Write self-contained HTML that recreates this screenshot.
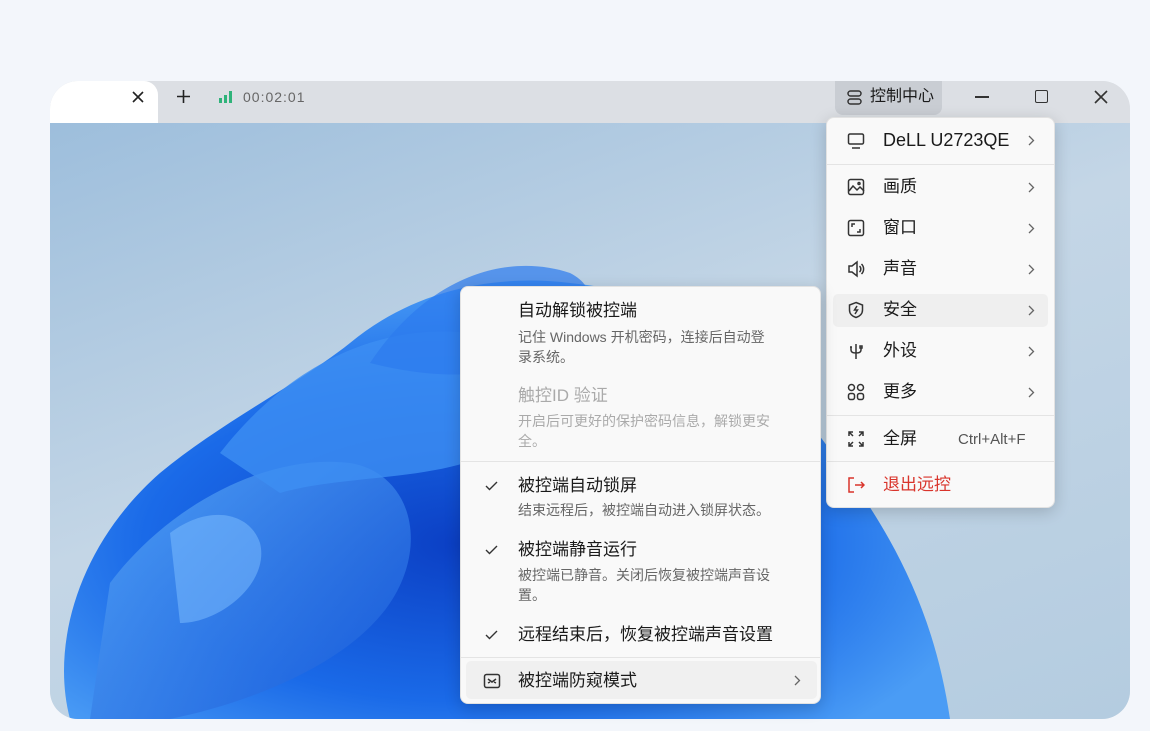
<!DOCTYPE html>
<html><head><meta charset="utf-8"><style>
*{margin:0;padding:0;box-sizing:border-box}
body{width:1150px;height:731px;background:#f3f6fb;position:relative;overflow:hidden;font-family:"Liberation Sans","Noto Sans CJK SC",sans-serif;color:#1a1a1a}
.win{position:absolute;left:50px;top:81px;width:1080px;height:638px;border-radius:28px;overflow:hidden;background:#dde1e6}
.tb{position:absolute;left:0;top:0;width:1080px;height:42px;background:#dcdfe4}
.tab{position:absolute;left:0;top:0;width:108px;height:42px;background:#fff;border-radius:0 14px 0 0}
.desk{position:absolute;left:0;top:42px;width:1080px;height:596px;background:linear-gradient(160deg,#9dbedc 0%,#c4d6e6 45%,#b4cce0 100%)}
.t{position:absolute;white-space:nowrap;line-height:1.15}
.menu{position:absolute;background:#f9f9f9;border-radius:8px;box-shadow:0 4px 16px rgba(0,0,0,.18);border:1px solid #e2e2e2}
.sep{position:absolute;left:0;right:0;height:1px;background:#e4e4e4}
svg.i{position:absolute}
</style></head><body>
<div class="win">
 <div class="tb"></div>
 <div class="tab"></div>
 <svg class="i" style="left:82px;top:10px" width="12" height="12" stroke="#222" stroke-width="1.6"><path d="M1 1l10 10M11 1L1 11"/></svg>
 <svg class="i" style="left:127px;top:9px" width="13" height="13" stroke="#222" stroke-width="1.6"><path d="M6.5 0v13M0 6.5h13"/></svg>
 <svg class="i" style="left:168px;top:8px" width="16" height="16"><rect x="1" y="9" width="3" height="5" fill="#2fb37a"/><rect x="6" y="6" width="3" height="8" fill="#2fb37a"/><rect x="11" y="2" width="3" height="12" fill="#2fb37a"/></svg>
 <div class="t" style="left:193px;top:8px;font-size:14px;color:#666;letter-spacing:1px">00:02:01</div>
 <div style="position:absolute;left:785px;top:0;width:107px;height:34px;background:#c9cdd3;border-radius:0 0 8px 8px"></div>
 <svg class="i" style="left:796px;top:8px" width="17" height="17" fill="none" stroke="#333" stroke-width="1.5"><rect x="2" y="2" width="13" height="5" rx="2.5"/><rect x="2" y="10" width="13" height="5" rx="2.5"/></svg>
 <div class="t" style="left:820px;top:7px;font-size:16px">控制中心</div>
 <div style="position:absolute;left:925px;top:15px;width:14px;height:1.5px;background:#333"></div>
 <div style="position:absolute;left:985px;top:9px;width:13px;height:13px;border:1.5px solid #333;border-radius:2px"></div>
 <svg class="i" style="left:1044px;top:9px" width="14" height="14" stroke="#333" stroke-width="1.6"><path d="M1 1l12 12M13 1L1 13"/></svg>
 <div class="desk">
  <svg width="1080" height="596" style="position:absolute;left:0;top:0">
   <defs>
    <radialGradient id="g" cx="45%" cy="60%" r="60%"><stop offset="0" stop-color="#0b3fc4"/><stop offset=".6" stop-color="#1a6ae8"/><stop offset="1" stop-color="#4a9cf5"/></radialGradient>
    <linearGradient id="p" x1="0" y1="0" x2="1" y2="1"><stop offset="0" stop-color="#5aaaf8"/><stop offset="1" stop-color="#1456d8"/></linearGradient>
   </defs>
   <path d="M20 596 C0 520 30 420 110 350 C170 300 250 260 300 220 C360 170 440 150 520 160 C620 170 700 210 760 300 C820 380 880 460 900 596 Z" fill="url(#g)"/>
   <path d="M60 460 C120 380 220 330 300 340 C360 350 380 420 340 480 C300 540 200 580 120 596 L40 596Z" fill="url(#p)" opacity=".8"/>
   <path d="M170 330 C240 240 330 200 420 210 C480 220 500 280 460 320 C400 360 300 350 230 370Z" fill="#3d8ef2" opacity=".8"/>
   <path d="M320 240 C380 150 460 130 520 150 C560 170 540 220 480 240 C420 260 360 250 320 240Z" fill="#2c7aee" opacity=".7"/>
   <path d="M120 410 C160 380 200 390 210 420 C220 460 170 500 130 500Z" fill="#7fc0ff" opacity=".5"/>
  </svg>
 </div>
</div>

<div class="menu" style="left:826px;top:117px;width:229px;height:391px">
 <svg class="i" style="left:20px;top:14px" width="18" height="18" fill="none" stroke="#333" stroke-width="1.5"><rect x="1.5" y="2" width="15" height="10" rx="1.5"/><path d="M5 16h8"/></svg>
 <div class="t" style="left:56px;top:12px;font-size:18px">DeLL U2723QE</div>
 <svg class="i" style="left:201px;top:17px" width="7" height="11" fill="none" stroke="#666" stroke-width="1.3"><path d="M1 1l4.5 4.5L1 10"/></svg>
 <div class="sep" style="top:46px"></div>
 <svg class="i" style="left:20px;top:60px" width="18" height="18" fill="none" stroke="#333" stroke-width="1.5"><rect x="1.5" y="1.5" width="15" height="15" rx="2"/><path d="M2 13l4-5 4 4 3-3 4 4"/><circle cx="12" cy="5.5" r="1"/></svg>
 <div class="t" style="left:56px;top:59px;font-size:17px">画质</div>
 <svg class="i" style="left:201px;top:64px" width="7" height="11" fill="none" stroke="#666" stroke-width="1.3"><path d="M1 1l4.5 4.5L1 10"/></svg>
 <svg class="i" style="left:20px;top:101px" width="18" height="18" fill="none" stroke="#333" stroke-width="1.5"><rect x="1.5" y="1.5" width="15" height="15" rx="2"/><path d="M5 8V5h3M13 10v3h-3"/></svg>
 <div class="t" style="left:56px;top:100px;font-size:17px">窗口</div>
 <svg class="i" style="left:201px;top:105px" width="7" height="11" fill="none" stroke="#666" stroke-width="1.3"><path d="M1 1l4.5 4.5L1 10"/></svg>
 <svg class="i" style="left:20px;top:142px" width="18" height="18" fill="none" stroke="#333" stroke-width="1.5"><path d="M2 6h3l5-4v14l-5-4H2z"/><path d="M12.5 6a4 4 0 0 1 0 6M14.5 4a7 7 0 0 1 0 10"/></svg>
 <div class="t" style="left:56px;top:141px;font-size:17px">声音</div>
 <svg class="i" style="left:201px;top:146px" width="7" height="11" fill="none" stroke="#666" stroke-width="1.3"><path d="M1 1l4.5 4.5L1 10"/></svg>
 <div style="position:absolute;left:6px;top:176px;width:215px;height:33px;background:#efefef;border-radius:5px"></div>
 <svg class="i" style="left:20px;top:183px" width="18" height="18" fill="none" stroke="#333" stroke-width="1.5"><path d="M9 1.5l6.5 2.5v5c0 4-3 6.5-6.5 7.5C5.5 15.5 2.5 13 2.5 9V4z"/><path d="M10 5l-2.5 4h3L8 13"/></svg>
 <div class="t" style="left:56px;top:182px;font-size:17px">安全</div>
 <svg class="i" style="left:201px;top:187px" width="7" height="11" fill="none" stroke="#666" stroke-width="1.3"><path d="M1 1l4.5 4.5L1 10"/></svg>
 <svg class="i" style="left:20px;top:224px" width="18" height="18" fill="none" stroke="#333" stroke-width="1.5"><path d="M9 2v15M4 5v3c0 2 2 3 5 3s5-1 5-3V6M3 5h2M13 4h2v2h-2z"/></svg>
 <div class="t" style="left:56px;top:223px;font-size:17px">外设</div>
 <svg class="i" style="left:201px;top:228px" width="7" height="11" fill="none" stroke="#666" stroke-width="1.3"><path d="M1 1l4.5 4.5L1 10"/></svg>
 <svg class="i" style="left:20px;top:265px" width="18" height="18" fill="none" stroke="#333" stroke-width="1.5"><rect x="1.5" y="1.5" width="6" height="6" rx="3"/><rect x="10.5" y="1.5" width="6" height="6" rx="3"/><rect x="1.5" y="10.5" width="6" height="6" rx="2"/><rect x="10.5" y="10.5" width="6" height="6" rx="2"/></svg>
 <div class="t" style="left:56px;top:264px;font-size:17px">更多</div>
 <svg class="i" style="left:201px;top:269px" width="7" height="11" fill="none" stroke="#666" stroke-width="1.3"><path d="M1 1l4.5 4.5L1 10"/></svg>
 <div class="sep" style="top:297px"></div>
 <svg class="i" style="left:20px;top:312px" width="18" height="18" fill="none" stroke="#333" stroke-width="1.5"><path d="M2 6V2h4M2 2l4 4M16 6V2h-4M16 2l-4 4M2 12v4h4M2 16l4-4M16 12v4h-4M16 16l-4-4"/></svg>
 <div class="t" style="left:56px;top:311px;font-size:17px">全屏</div>
 <div class="t" style="left:131px;top:313px;font-size:15px;color:#555">Ctrl+Alt+F</div>
 <div class="sep" style="top:343px"></div>
 <svg class="i" style="left:20px;top:358px" width="18" height="18" fill="none" stroke="#d9342b" stroke-width="1.5"><path d="M7 2H2v14h5M8 9h9M14 6l3 3-3 3"/></svg>
 <div class="t" style="left:56px;top:357px;font-size:17px;color:#d9342b">退出远控</div>
</div>

<div class="menu" style="left:460px;top:286px;width:361px;height:418px">
 <div class="t" style="left:57px;top:14px;font-size:17px">自动解锁被控端</div>
 <div class="t" style="left:57px;top:40px;font-size:14px;color:#666;line-height:20px">记住 Windows 开机密码，连接后自动登<br>录系统。</div>
 <div class="t" style="left:57px;top:99px;font-size:17px;color:#aaa">触控ID 验证</div>
 <div class="t" style="left:57px;top:124px;font-size:14px;color:#aaa;line-height:20px">开启后可更好的保护密码信息，解锁更安<br>全。</div>
 <div class="sep" style="top:174px"></div>
 <svg class="i" style="left:24px;top:194px" width="13" height="10" fill="none" stroke="#333" stroke-width="1.4"><path d="M1 5l3.5 3.5L12 1"/></svg>
 <div class="t" style="left:57px;top:189px;font-size:17px">被控端自动锁屏</div>
 <div class="t" style="left:57px;top:215px;font-size:14px;color:#666">结束远程后，被控端自动进入锁屏状态。</div>
 <svg class="i" style="left:24px;top:258px" width="13" height="10" fill="none" stroke="#333" stroke-width="1.4"><path d="M1 5l3.5 3.5L12 1"/></svg>
 <div class="t" style="left:57px;top:253px;font-size:17px">被控端静音运行</div>
 <div class="t" style="left:57px;top:278px;font-size:14px;color:#666;line-height:20px">被控端已静音。关闭后恢复被控端声音设<br>置。</div>
 <svg class="i" style="left:24px;top:343px" width="13" height="10" fill="none" stroke="#333" stroke-width="1.4"><path d="M1 5l3.5 3.5L12 1"/></svg>
 <div class="t" style="left:57px;top:338px;font-size:17px">远程结束后，恢复被控端声音设置</div>
 <div class="sep" style="top:370px"></div>
 <div style="position:absolute;left:5px;top:374px;width:351px;height:38px;background:#f0f0f0;border-radius:5px"></div>
 <svg class="i" style="left:22px;top:385px" width="18" height="18" fill="none" stroke="#333" stroke-width="1.5"><rect x="1.5" y="2.5" width="15" height="13" rx="2"/><path d="M5 7l4 3 4-3M5 11l2-1M13 11l-2-1"/></svg>
 <div class="t" style="left:57px;top:384px;font-size:17px">被控端防窥模式</div>
 <svg class="i" style="left:333px;top:388px" width="7" height="11" fill="none" stroke="#666" stroke-width="1.3"><path d="M1 1l4.5 4.5L1 10"/></svg>
</div>
</body></html>
